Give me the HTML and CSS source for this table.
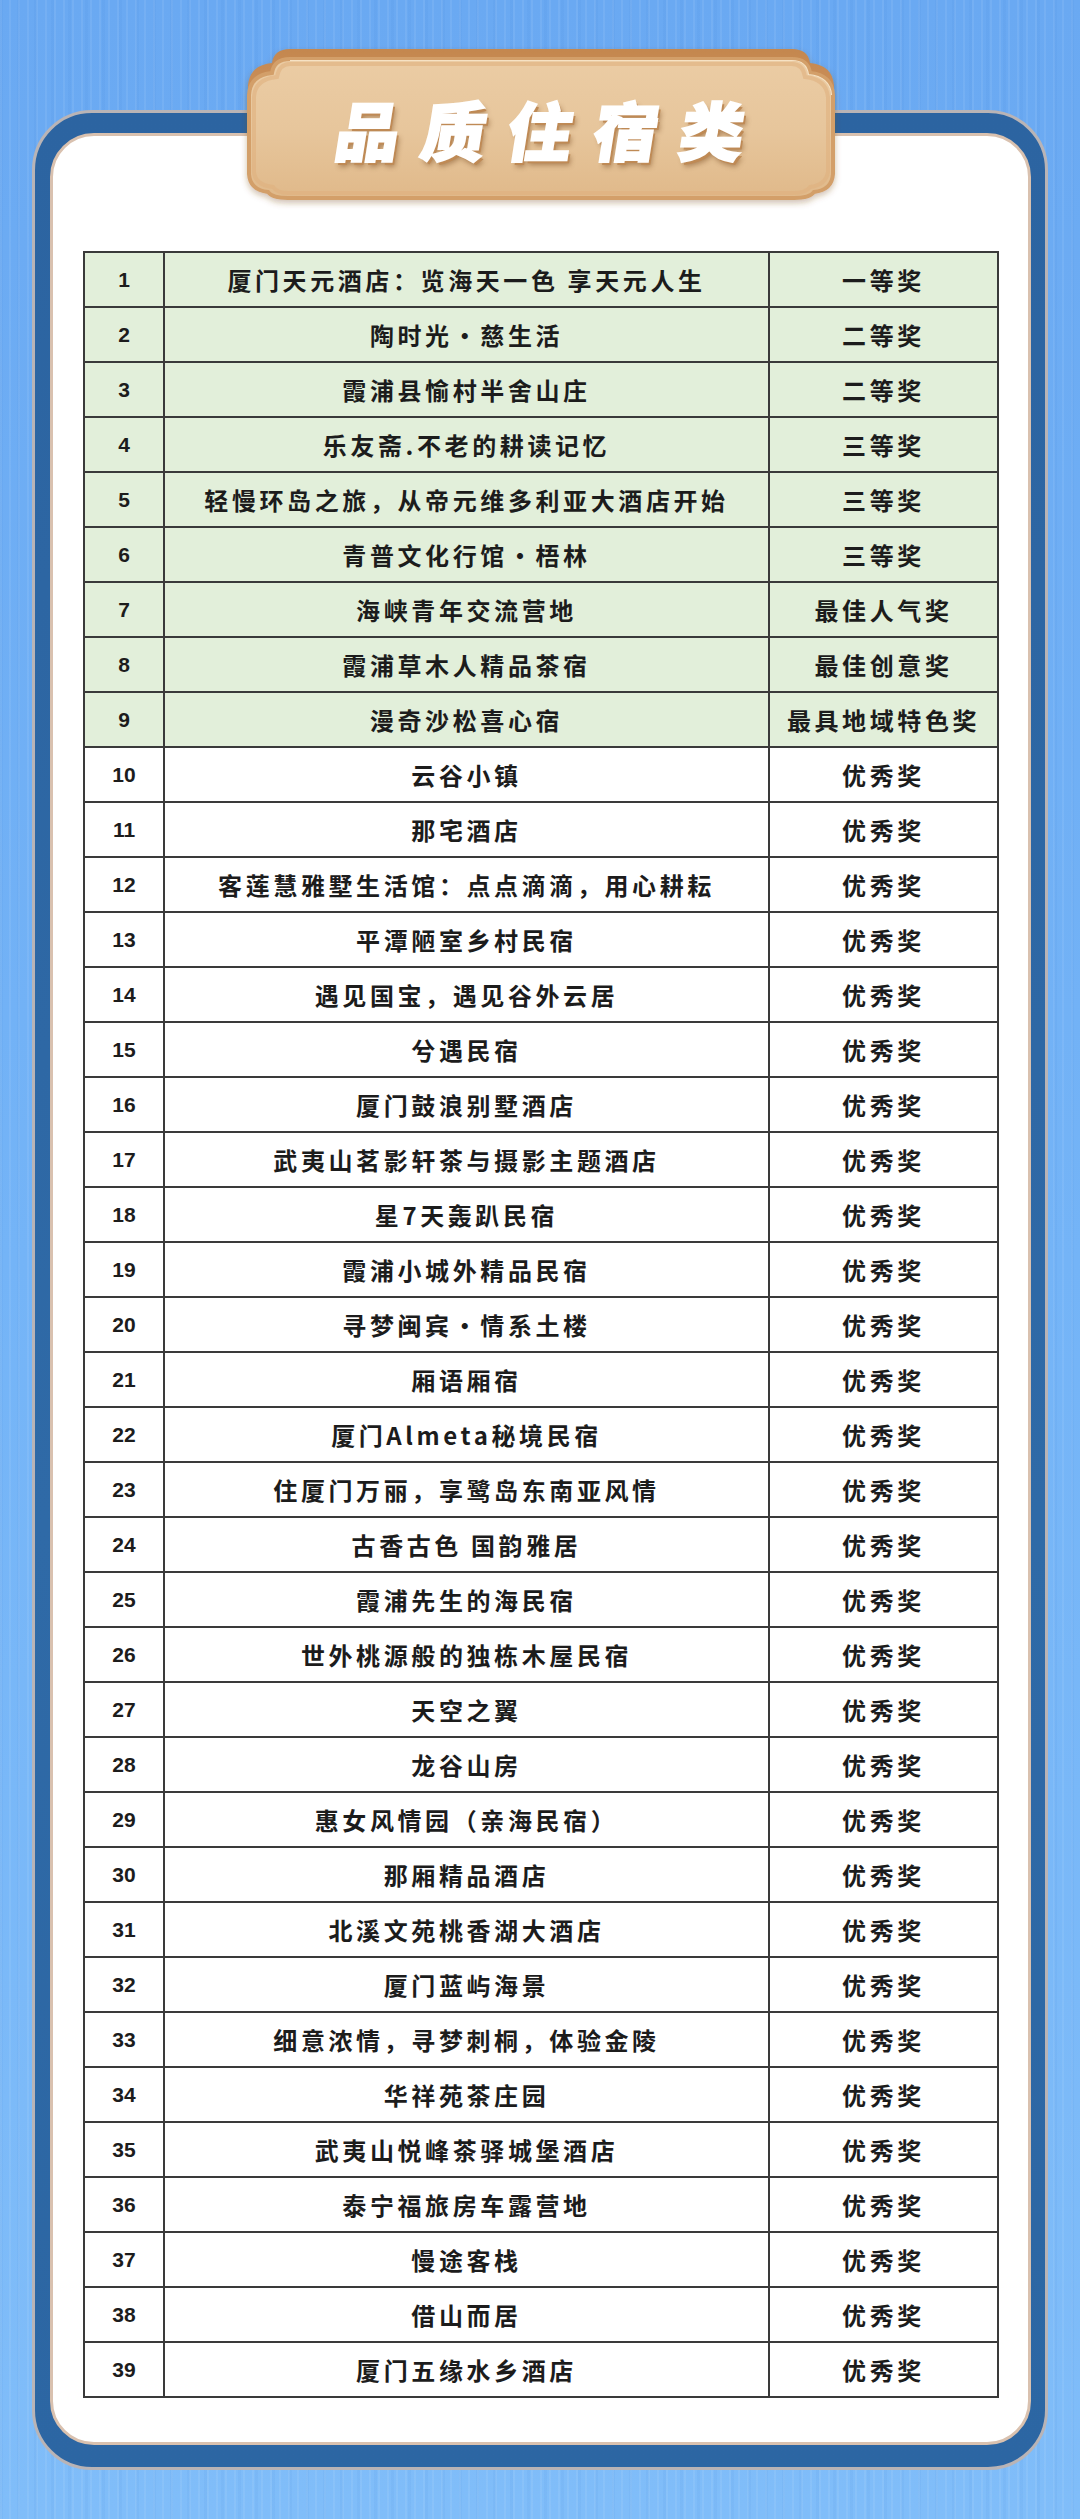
FILE: index.html
```html
<!DOCTYPE html>
<html lang="zh-CN">
<head>
<meta charset="utf-8">
<title>品质住宿类</title>
<link rel="stylesheet" href="styles.css">
</head>
<body>
<div class="page">
  <div class="plaque">
    <svg class="plaque-bg" width="586" height="152" viewBox="0 0 586 152" aria-hidden="true">
      <defs>
        <linearGradient id="depth" x1="0" y1="0" x2="0" y2="1">
          <stop offset="0" stop-color="#c4874f"/>
          <stop offset="1" stop-color="#d8a170"/>
        </linearGradient>
        <linearGradient id="face" x1="0" y1="0" x2="0" y2="1">
          <stop offset="0" stop-color="#ebcca4"/>
          <stop offset="0.5" stop-color="#e7c69c"/>
          <stop offset="1" stop-color="#e0b98a"/>
        </linearGradient>
        <filter id="soft" x="-5%" y="-10%" width="110%" height="130%">
          <feDropShadow dx="0" dy="3" stdDeviation="3" flood-color="#7a4a20" flood-opacity="0.35"/>
        </filter>
      </defs>
      <g filter="url(#soft)">
        <path fill="url(#depth)" d="M42 1 H544 Q560 1 562 15 Q584 17 586 37 V117 Q584 133 566 135 Q562 141 546 141 H40 Q24 141 20 135 Q2 133 0 117 V37 Q2 17 24 15 Q26 1 42 1 Z"/>
        <path fill="url(#face)" stroke="#d39f69" stroke-width="4" d="M42 11 H544 Q560 11 562 25 Q584 27 585 47 V126 Q584 142 566 144 Q562 150 546 150 H40 Q24 150 20 144 Q2 142 1 126 V47 Q2 27 24 25 Q26 11 42 11 Z"/>
        <path fill="none" stroke="#dfb07f" stroke-opacity="0.6" stroke-width="4" d="M42 16 H544 Q555 16 557 29 Q578 31 580 49 V124 Q578 137 562 139 Q558 145 546 145 H40 Q29 145 25 139 Q7 137 6 124 V49 Q7 31 29 29 Q31 16 42 16 Z"/>
        <path fill="none" stroke="#f6e2c4" stroke-width="1.2" d="M42 12.5 H544 Q558.5 12.5 560.5 26.5 Q582 28.5 583.5 47"/>
      </g>
    </svg>
    <h1 class="plaque-title"><span class="plaque-text">品质住宿类</span></h1>
  </div>

  <div class="frame">
    <div class="panel">
      <table class="awards">
        <colgroup>
          <col class="c-num">
          <col class="c-name">
          <col class="c-award">
        </colgroup>
        <tbody>
          <tr class="top"><td class="num">1</td><td>厦门天元酒店：览海天一色&nbsp;享天元人生</td><td>一等奖</td></tr>
          <tr class="top"><td class="num">2</td><td>陶时光・慈生活</td><td>二等奖</td></tr>
          <tr class="top"><td class="num">3</td><td>霞浦县愉村半舍山庄</td><td>二等奖</td></tr>
          <tr class="top"><td class="num">4</td><td>乐友斋.不老的耕读记忆</td><td>三等奖</td></tr>
          <tr class="top"><td class="num">5</td><td>轻慢环岛之旅，从帝元维多利亚大酒店开始</td><td>三等奖</td></tr>
          <tr class="top"><td class="num">6</td><td>青普文化行馆・梧林</td><td>三等奖</td></tr>
          <tr class="top"><td class="num">7</td><td>海峡青年交流营地</td><td>最佳人气奖</td></tr>
          <tr class="top"><td class="num">8</td><td>霞浦草木人精品茶宿</td><td>最佳创意奖</td></tr>
          <tr class="top"><td class="num">9</td><td>漫奇沙松喜心宿</td><td>最具地域特色奖</td></tr>
          <tr><td class="num">10</td><td>云谷小镇</td><td>优秀奖</td></tr>
          <tr><td class="num">11</td><td>那宅酒店</td><td>优秀奖</td></tr>
          <tr><td class="num">12</td><td>客莲慧雅墅生活馆：点点滴滴，用心耕耘</td><td>优秀奖</td></tr>
          <tr><td class="num">13</td><td>平潭陋室乡村民宿</td><td>优秀奖</td></tr>
          <tr><td class="num">14</td><td>遇见国宝，遇见谷外云居</td><td>优秀奖</td></tr>
          <tr><td class="num">15</td><td>兮遇民宿</td><td>优秀奖</td></tr>
          <tr><td class="num">16</td><td>厦门鼓浪别墅酒店</td><td>优秀奖</td></tr>
          <tr><td class="num">17</td><td>武夷山茗影轩茶与摄影主题酒店</td><td>优秀奖</td></tr>
          <tr><td class="num">18</td><td>星7天轰趴民宿</td><td>优秀奖</td></tr>
          <tr><td class="num">19</td><td>霞浦小城外精品民宿</td><td>优秀奖</td></tr>
          <tr><td class="num">20</td><td>寻梦闽宾・情系土楼</td><td>优秀奖</td></tr>
          <tr><td class="num">21</td><td>厢语厢宿</td><td>优秀奖</td></tr>
          <tr><td class="num">22</td><td>厦门Almeta秘境民宿</td><td>优秀奖</td></tr>
          <tr><td class="num">23</td><td>住厦门万丽，享鹭岛东南亚风情</td><td>优秀奖</td></tr>
          <tr><td class="num">24</td><td>古香古色&nbsp;国韵雅居</td><td>优秀奖</td></tr>
          <tr><td class="num">25</td><td>霞浦先生的海民宿</td><td>优秀奖</td></tr>
          <tr><td class="num">26</td><td>世外桃源般的独栋木屋民宿</td><td>优秀奖</td></tr>
          <tr><td class="num">27</td><td>天空之翼</td><td>优秀奖</td></tr>
          <tr><td class="num">28</td><td>龙谷山房</td><td>优秀奖</td></tr>
          <tr><td class="num">29</td><td>惠女风情园（亲海民宿）</td><td>优秀奖</td></tr>
          <tr><td class="num">30</td><td>那厢精品酒店</td><td>优秀奖</td></tr>
          <tr><td class="num">31</td><td>北溪文苑桃香湖大酒店</td><td>优秀奖</td></tr>
          <tr><td class="num">32</td><td>厦门蓝屿海景</td><td>优秀奖</td></tr>
          <tr><td class="num">33</td><td>细意浓情，寻梦刺桐，体验金陵</td><td>优秀奖</td></tr>
          <tr><td class="num">34</td><td>华祥苑茶庄园</td><td>优秀奖</td></tr>
          <tr><td class="num">35</td><td>武夷山悦峰茶驿城堡酒店</td><td>优秀奖</td></tr>
          <tr><td class="num">36</td><td>泰宁福旅房车露营地</td><td>优秀奖</td></tr>
          <tr><td class="num">37</td><td>慢途客栈</td><td>优秀奖</td></tr>
          <tr><td class="num">38</td><td>借山而居</td><td>优秀奖</td></tr>
          <tr><td class="num">39</td><td>厦门五缘水乡酒店</td><td>优秀奖</td></tr>
        </tbody>
      </table>
    </div>
  </div>
</div>
</body>
</html>
```

FILE: styles.css
```css
html, body {
  margin: 0;
  padding: 0;
}

body {
  width: 1080px;
  min-height: 2519px;
  background-color: #74b3f6;
  background-image:
    repeating-linear-gradient(90deg, rgba(255,255,255,0.07) 0 2px, rgba(255,255,255,0) 2px 9px),
    repeating-linear-gradient(90deg, rgba(40,110,200,0.06) 0 3px, rgba(40,110,200,0) 3px 17px),
    linear-gradient(180deg, #6aa9f2 0%, #74b4f7 50%, #80bdf9 100%);
  font-family: "Noto Sans CJK SC", "Noto Sans", sans-serif;
}

.page {
  position: relative;
  width: 1080px;
  height: 2519px;
  padding-top: 110px;
  box-sizing: border-box;
}

/* ---------- title plaque (overlaps the frame) ---------- */
.plaque {
  position: absolute;
  left: 248px;
  top: 48px;
  width: 586px;
  height: 152px;
  z-index: 2;
}

.plaque-bg {
  position: absolute;
  left: 0;
  top: 0;
  overflow: visible;
}

.plaque-title {
  position: relative;
  margin: 0;
  height: 152px;
  padding: 8px 0 0 22px;
  box-sizing: border-box;
  display: flex;
  align-items: center;
  justify-content: center;
  font-family: "Noto Sans CJK SC", sans-serif;
  font-weight: 900;
  font-style: normal;
  font-size: 64px;
  letter-spacing: 22px;
  color: #ffffff;
}

.plaque-text {
  display: inline-block;
  transform: skewX(-9deg);
  -webkit-text-stroke: 2px #ffffff;
  text-shadow: 3px 3px 0 #bf8a55, 4px 5px 5px rgba(110, 65, 25, 0.45);
}

/* ---------- blue frame ---------- */
.frame {
  width: 1016px;
  margin-left: 32px;
  box-sizing: border-box;
  border: 3px solid #b9b4b6;
  border-radius: 60px;
  background: linear-gradient(180deg, #2c64a1 0%, #2f6aa7 60%, #2c66a3 100%);
  padding: 20px 14px 22px 15px;
}

.panel {
  background: #ffffff;
  border: 3px solid #d9c1af;
  border-radius: 44px;
  padding: 115px 31px 44px 30px;
}

/* ---------- table ---------- */
.awards {
  width: 914px;
  border-collapse: collapse;
  table-layout: fixed;
  border: 2px solid #3a3a3a;
  color: #1c1c1c;
}

.c-num { width: 80px; }
.c-name { width: 605px; }
.c-award { width: 229px; }

.awards tr {
  height: 55px;
}

.awards td {
  border: 2px solid #3a3a3a;
  padding: 0;
  text-align: center;
  vertical-align: middle;
  font-family: "Noto Sans CJK SC", sans-serif;
  font-weight: 700;
  font-size: 24px;
  letter-spacing: 3.6px;
  line-height: 1;
  white-space: nowrap;
}

.awards td.num {
  font-family: "Liberation Sans", Arial, sans-serif;
  font-weight: 700;
  font-size: 21px;
  letter-spacing: 0;
}

.awards tr.top td {
  background: #e2efda;
}
```
